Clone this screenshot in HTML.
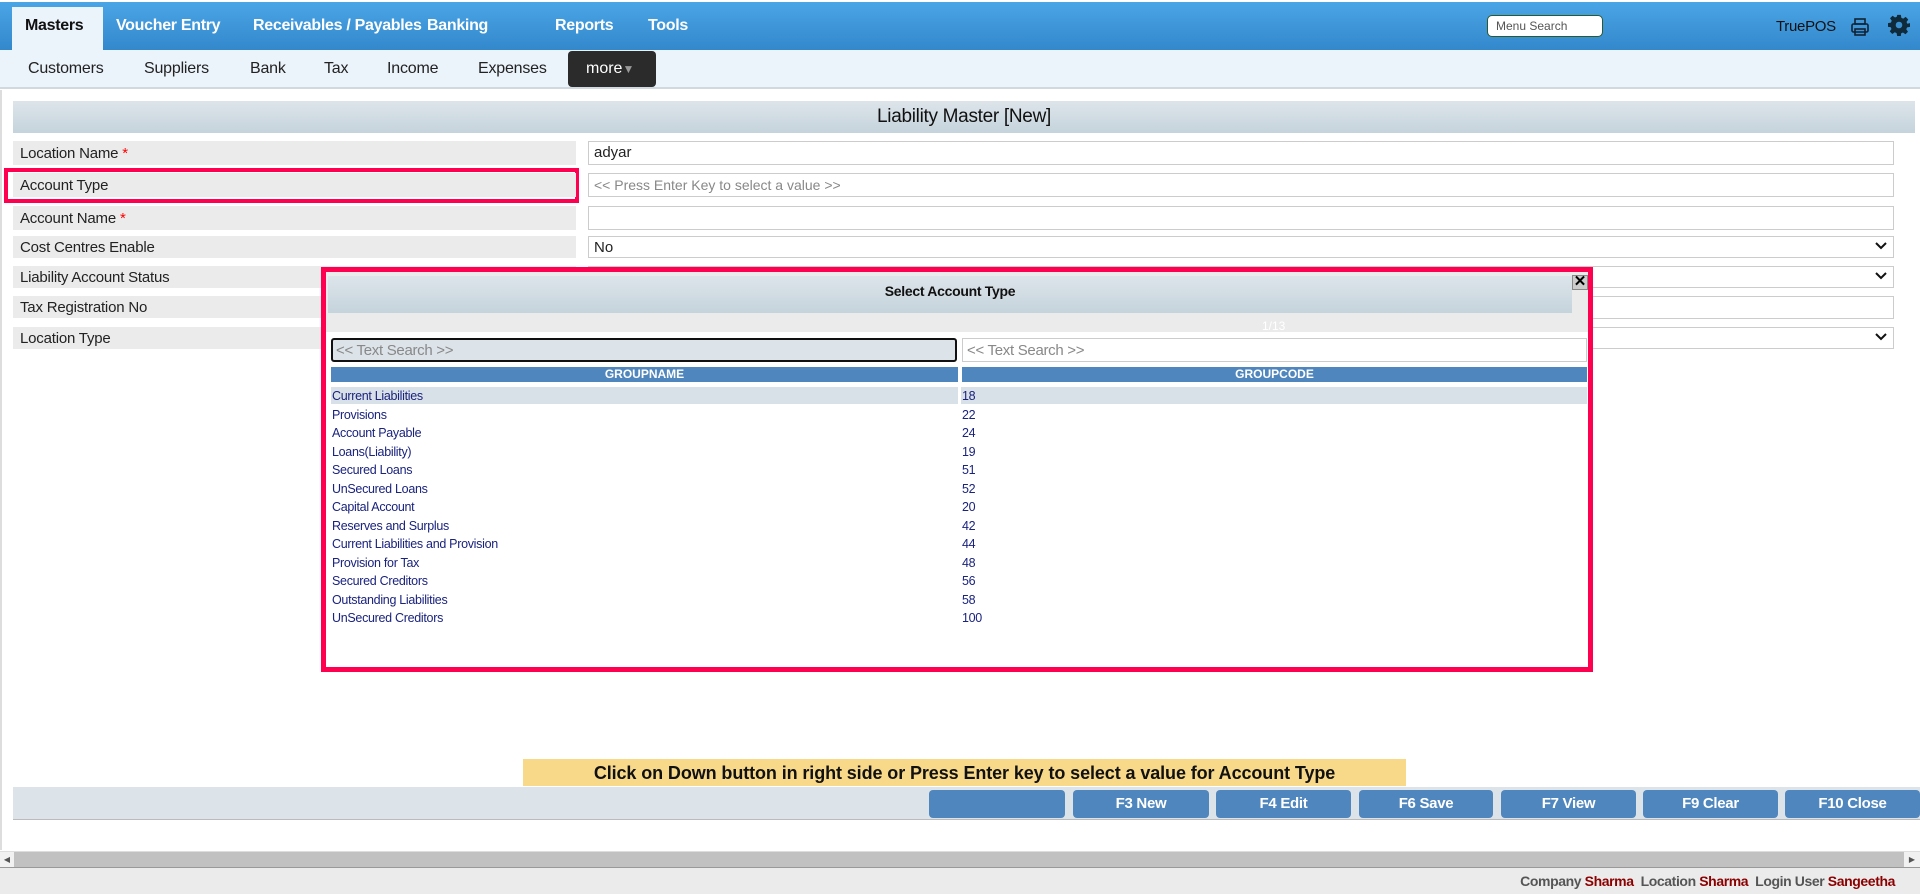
<!DOCTYPE html>
<html><head><meta charset="utf-8"><style>
*{box-sizing:border-box;margin:0;padding:0}
body{width:1920px;height:894px;overflow:hidden;background:#fff;font-family:"Liberation Sans",Arial,sans-serif;position:relative}
.a{position:absolute}
.top{left:0;top:2px;width:1920px;height:48px;background:linear-gradient(#4aa5e6,#3388cc)}
.nav{top:2px;height:48px;line-height:48px;color:#fff;font-weight:bold;font-size:16px;letter-spacing:-0.3px}
.sub{left:0;top:50px;width:1920px;height:39px;background:#ebf3fb;border-bottom:2px solid #d0d8e0}
.si{top:50px;height:38px;line-height:38px;font-size:16px;color:#222;letter-spacing:-0.2px}
.lbl{left:13px;width:563px;height:24px;background:#ebebeb;font-size:15px;line-height:26px;padding-left:7px;color:#222;letter-spacing:-0.2px}
.inp{left:588px;width:1306px;height:24px;border:1px solid #ccc;background:#fff;font-size:15px;line-height:22px;padding-left:5px;color:#222}
.chev{position:absolute;right:6px;top:4px}
.row{left:332px;width:1255px;height:18.5px;font-size:12.5px;line-height:18.5px;color:#1a237e;letter-spacing:-0.3px}
.row span{position:absolute;left:630px}
.btn{top:790px;height:28px;background:#4f86bd;border-radius:4px;color:#fff;font-weight:bold;font-size:15px;line-height:28px;text-align:center;letter-spacing:-0.3px}
</style></head><body>
<div class="a top"></div>
<div class="a" style="left:12px;top:7px;width:91px;height:43px;background:#ebf3fb"></div>
<div class="a nav" style="left:25px;color:#111">Masters</div>
<div class="a nav" style="left:116px">Voucher Entry</div>
<div class="a nav" style="left:253px">Receivables / Payables</div>
<div class="a nav" style="left:427px">Banking</div>
<div class="a nav" style="left:555px">Reports</div>
<div class="a nav" style="left:648px">Tools</div>
<div class="a" style="left:1487px;top:15px;width:116px;height:22px;background:#fff;border:1px solid #2d5a2d;border-radius:5px;font-size:12px;color:#555;line-height:20px;padding-left:8px">Menu Search</div>
<div class="a" style="left:1776px;top:18px;font-size:15px;color:#111;letter-spacing:-0.3px">TruePOS</div>
<svg class="a" style="left:1850px;top:17px" width="20" height="20" viewBox="0 0 20 20" fill="none" stroke="#123" stroke-width="1.6"><rect x="5" y="2" width="10" height="5"/><rect x="2" y="7" width="16" height="8" rx="1.5"/><rect x="5" y="12" width="10" height="6"/></svg>
<svg class="a" style="left:1888px;top:14px" width="22" height="22" viewBox="0 0 24 24"><path fill="#0f2a3a" d="M10 1h4l.6 3.2 2 .9 2.7-1.9 2.8 2.8-1.9 2.7.9 2L24 10v4l-3.2.6-.9 2 1.9 2.7-2.8 2.8-2.7-1.9-2 .9L14 24h-4l-.6-3.2-2-.9-2.7 1.9-2.8-2.8 1.9-2.7-.9-2L0 14v-4l3.2-.6.9-2-1.9-2.7 2.8-2.8 2.7 1.9 2-.9z"/><circle cx="12" cy="12" r="3.6" fill="#3a8fd0"/></svg>
<div class="a sub"></div>
<div class="a si" style="left:28px">Customers</div>
<div class="a si" style="left:144px">Suppliers</div>
<div class="a si" style="left:250px">Bank</div>
<div class="a si" style="left:324px">Tax</div>
<div class="a si" style="left:387px">Income</div>
<div class="a si" style="left:478px">Expenses</div>
<div class="a" style="left:568px;top:51px;width:88px;height:36px;background:#2b2b2b;border-radius:4px;color:#fff;font-size:16px;line-height:36px;padding-left:18px">more<span style="color:#999;font-size:12px">▼</span></div>
<div class="a" style="left:0;top:90px;width:2px;height:760px;background:#ddd"></div>
<div class="a" style="left:13px;top:101px;width:1902px;height:32px;background:linear-gradient(#dde5ea,#c5d3dc);text-align:center;font-size:19px;line-height:32px;color:#111;letter-spacing:-0.3px">Liability Master [New]</div>

<div class="a lbl" style="top:141px">Location Name <span style="color:red">*</span></div>
<div class="a inp" style="top:141px">adyar</div>
<div class="a" style="left:4px;top:168px;width:575px;height:35px;border:4px solid #ff0050"></div>
<div class="a lbl" style="top:173px">Account Type</div>
<div class="a inp" style="top:173px;color:#888;font-size:14px">&lt;&lt; Press Enter Key to select a value &gt;&gt;</div>
<div class="a lbl" style="top:206px">Account Name <span style="color:red">*</span></div>
<div class="a inp" style="top:206px"></div>
<div class="a lbl" style="top:236px;height:22px;line-height:24px">Cost Centres Enable</div>
<div class="a inp" style="top:236px;height:22px;line-height:22px">No<svg class="chev" width="12" height="10" viewBox="0 0 12 10"><path d="M1 2l5 5 5-5" stroke="#111" stroke-width="2" fill="none"/></svg></div>
<div class="a lbl" style="top:266px;height:22px;line-height:24px">Liability Account Status</div>
<div class="a inp" style="top:266px;height:22px"><svg class="chev" width="12" height="10" viewBox="0 0 12 10"><path d="M1 2l5 5 5-5" stroke="#111" stroke-width="2" fill="none"/></svg></div>
<div class="a lbl" style="top:296px;height:22px;line-height:24px">Tax Registration No</div>
<div class="a inp" style="top:296px;height:23px"></div>
<div class="a lbl" style="top:327px;height:22px;line-height:24px">Location Type</div>
<div class="a inp" style="top:327px;height:22px"><svg class="chev" width="12" height="10" viewBox="0 0 12 10"><path d="M1 2l5 5 5-5" stroke="#111" stroke-width="2" fill="none"/></svg></div>

<div class="a" style="left:321px;top:267px;width:1272px;height:405px;border:5px solid #ff0050;background:#fff"></div>
<div class="a" style="left:326px;top:272px;width:1262px;height:60px;background:#ebebeb"></div>
<div class="a" style="left:328px;top:276px;width:1244px;height:37px;background:linear-gradient(#dde5ea,#c5d3dc);text-align:center;font-weight:bold;font-size:14px;line-height:30px;color:#111;letter-spacing:-0.3px">Select Account Type</div>
<div class="a" style="left:1572px;top:275px;width:16px;height:15px;background:#ccc;border:1px solid #888;font-size:15px;font-weight:bold;line-height:12px;text-align:center">✕</div>
<div class="a" style="left:1262px;top:319px;font-size:12px;color:#fff">1/13</div>
<div class="a" style="left:331px;top:338px;width:626px;height:24px;border:2px solid #111;border-radius:3px;background:#dce3e9;font-size:15px;color:#888;line-height:21px;padding-left:3px;letter-spacing:-0.3px">&lt;&lt; Text Search &gt;&gt;</div>
<div class="a" style="left:962px;top:338px;width:625px;height:24px;border:1px solid #ccc;background:#fff;font-size:15px;color:#888;line-height:23px;padding-left:4px;letter-spacing:-0.3px">&lt;&lt; Text Search &gt;&gt;</div>
<div class="a" style="left:331px;top:367px;width:627px;height:15px;background:#4f86bd;color:#fff;font-weight:bold;font-size:12px;text-align:center;line-height:15px">GROUPNAME</div>
<div class="a" style="left:962px;top:367px;width:625px;height:15px;background:#4f86bd;color:#fff;font-weight:bold;font-size:12px;text-align:center;line-height:15px">GROUPCODE</div>
<div class="a" style="left:331px;top:387px;width:627px;height:17px;background:#d9e1e8"></div>
<div class="a" style="left:961px;top:387px;width:626px;height:17px;background:#d9e1e8"></div>
<div class="a row" style="top:387px">Current Liabilities<span>18</span></div>
<div class="a row" style="top:405.5px">Provisions<span>22</span></div>
<div class="a row" style="top:424px">Account Payable<span>24</span></div>
<div class="a row" style="top:442.5px">Loans(Liability)<span>19</span></div>
<div class="a row" style="top:461px">Secured Loans<span>51</span></div>
<div class="a row" style="top:479.5px">UnSecured Loans<span>52</span></div>
<div class="a row" style="top:498px">Capital Account<span>20</span></div>
<div class="a row" style="top:516.5px">Reserves and Surplus<span>42</span></div>
<div class="a row" style="top:535px">Current Liabilities and Provision<span>44</span></div>
<div class="a row" style="top:553.5px">Provision for Tax<span>48</span></div>
<div class="a row" style="top:572px">Secured Creditors<span>56</span></div>
<div class="a row" style="top:590.5px">Outstanding Liabilities<span>58</span></div>
<div class="a row" style="top:609px">UnSecured Creditors<span>100</span></div>

<div class="a" style="left:523px;top:759px;width:883px;height:27px;background:#f8d98a;font-weight:bold;font-size:18px;line-height:29px;text-align:center;color:#111;letter-spacing:-0.1px">Click on Down button in right side or Press Enter key to select a value for Account Type</div>
<div class="a" style="left:13px;top:787px;width:1907px;height:33px;background:#dce3e9;border-bottom:1px solid #bbb"></div>
<div class="a btn" style="left:929px;width:136px"></div>
<div class="a btn" style="left:1073px;width:136px">F3 New</div>
<div class="a btn" style="left:1216px;width:135px">F4 Edit</div>
<div class="a btn" style="left:1359px;width:134px">F6 Save</div>
<div class="a btn" style="left:1501px;width:135px">F7 View</div>
<div class="a btn" style="left:1643px;width:135px">F9 Clear</div>
<div class="a btn" style="left:1785px;width:135px">F10 Close</div>

<div class="a" style="left:0;top:851px;width:1920px;height:16px;background:#c1c1c1;border-top:1px solid #ddd"></div>
<div class="a" style="left:0;top:852px;width:14px;height:15px;background:#f1f1f1;font-size:8px;color:#555;line-height:15px;text-align:center">◀</div>
<div class="a" style="left:1904px;top:852px;width:16px;height:15px;background:#f1f1f1;font-size:8px;color:#555;line-height:15px;text-align:center">▶</div>
<div class="a" style="left:0;top:867px;width:1920px;height:27px;background:#ebebeb;border-top:1px solid #999"></div>
<div class="a" style="right:25px;top:873px;font-size:14px;font-weight:bold;color:#555;letter-spacing:-0.4px">Company <span style="color:#8b0000">Sharma</span>&nbsp; Location <span style="color:#8b0000">Sharma</span>&nbsp; Login User <span style="color:#8b0000">Sangeetha</span></div>
</body></html>
